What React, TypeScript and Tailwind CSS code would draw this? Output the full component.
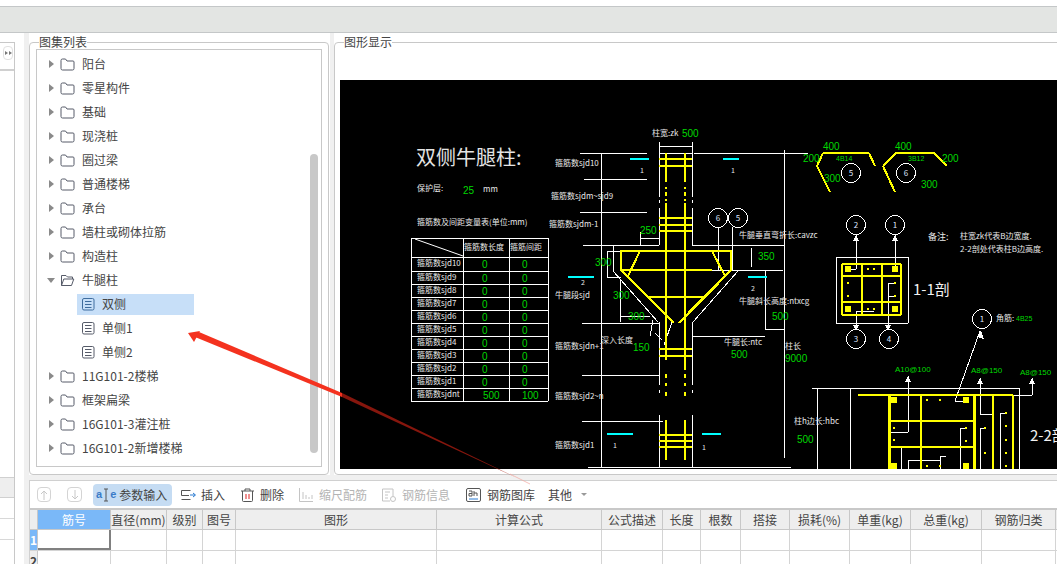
import type { ReactNode } from "react";

const FONT = "font-['Noto_Sans_CJK_SC','Liberation_Sans',sans-serif]";

const treeTop = ["阳台", "零星构件", "基础", "现浇桩", "圈过梁", "普通楼梯", "承台", "墙柱或砌体拉筋", "构造柱"];
const treeBottom = ["11G101-2楼梯", "框架扁梁", "16G101-3灌注桩", "16G101-2新增楼梯"];
const headers = ["直径(mm)", "级别", "图号", "图形", "计算公式", "公式描述", "长度", "根数", "搭接", "损耗(%)", "单重(kg)", "总重(kg)", "钢筋归类"];
const GRID = "grid grid-cols-[8px_73px_56px_36px_33px_201px_165px_61px_38px_40px_49px_60px_61px_71px_74px_1fr]";

function Folder({ open }: { open?: boolean }) {
  return (
    <svg width="15" height="13" viewBox="0 0 15 13" fill="none" stroke="#565b69" strokeWidth="1" className="shrink-0">
      {open ? (
        <path d="M1.5 11.5V1.5H6L7.5 3H12.5V5M1.5 11.5H11.5L13.8 5H3.8L1.5 11.5Z" />
      ) : (
        <path d="M1 2.5Q1 1 2.5 1H5.5L7 3H13Q14 3 14 4V10.5Q14 12 12.5 12H2.5Q1 12 1 10.5Z" />
      )}
    </svg>
  );
}

function Doc({ active }: { active?: boolean }) {
  const c = active ? "#3f6d9e" : "#565b69";
  return (
    <svg width="13" height="13" viewBox="0 0 13 13" fill="none" stroke={c} strokeWidth="1" className="shrink-0">
      <rect x="0.5" y="0.5" width="11.5" height="11.5" rx="1.5" />
      <path d="M3 3.5H9.5M3 6.5H9.5M3 9.5H9.5" />
    </svg>
  );
}

function TreeRow({ label }: { label: string }) {
  return (
    <div className="flex h-6 items-center pl-[12px]">
      <span className="h-0 w-0 border-y-[4px] border-l-[5px] border-y-transparent border-l-[#8a8a8a]" />
      <span className="ml-[6px]"><Folder /></span>
      <span className="ml-[7px] text-xs text-[#444]">{label}</span>
    </div>
  );
}

function ChildRow({ label, active }: { label: string; active?: boolean }) {
  return (
    <div className={`ml-[40px] flex h-6 w-[117px] items-center pl-[5px] ${active ? "bg-[#c7dff8] h-[21px] my-[1.5px]" : ""}`}>
      <Doc active={active} />
      <span className="ml-[7px] text-xs text-[#444]">{label}</span>
    </div>
  );
}

function ToolBtn({ icon, label, className }: { icon: ReactNode; label: string; className: string }) {
  return (
    <div className={`flex items-center text-xs ${className}`}>
      {icon}
      <span>{label}</span>
    </div>
  );
}

// ---- CAD drawing helpers, coordinates are page pixels ----
type Seg = [number, number, number, number];

function Lines({ segs, color = "#fff", w = 1 }: { segs: Seg[]; color?: string; w?: number }) {
  return (
    <g stroke={color} strokeWidth={w}>
      {segs.map(([a, b, c, d], i) => (
        <line key={i} x1={a} y1={b} x2={c} y2={d} />
      ))}
    </g>
  );
}

function T({ x, y, s = 8, c = "#e8e8e8", children }: { x: number; y: number; s?: number; c?: string; children: ReactNode }) {
  return (
    <text x={x} y={y} fontSize={s} fill={c}>
      {children}
    </text>
  );
}

function G({ x, y, s = 10, children }: { x: number; y: number; s?: number; children: ReactNode }) {
  return (
    <text x={x} y={y} fontSize={s} fill="#00d800" fontFamily="Liberation Sans">
      {children}
    </text>
  );
}

function Ring({ x, y, n }: { x: number; y: number; n: string }) {
  return (
    <g>
      <circle cx={x} cy={y} r="9.5" fill="none" stroke="#fff" strokeWidth="1" />
      <text x={x} y={y + 3} fontSize="8" fill="#dfe6ff" textAnchor="middle">{n}</text>
    </g>
  );
}

function Dots({ pts, r }: { pts: [number, number][]; r: number }) {
  return (
    <g fill="#ffff00">
      {pts.map(([x, y], i) => (
        <circle key={i} cx={x} cy={y} r={r} />
      ))}
    </g>
  );
}

const tableRows = [257, 271, 284, 297, 310, 323, 336, 349, 362, 375, 388, 401];
const tableLabels = ["sjd10", "sjd9", "sjd8", "sjd7", "sjd6", "sjd5", "sjd4", "sjd3", "sjd2", "sjd1", "sjdnt"];

const white: Seg[] = [
  // column outline
  [659, 142, 659, 197], [692, 142, 692, 197], [659, 200, 659, 203], [692, 200, 692, 203], [659, 208, 659, 245], [692, 208, 692, 245],
  [659, 322, 659, 385], [692, 322, 692, 385], [659, 390, 659, 393], [692, 390, 692, 393], [659, 415, 659, 467], [692, 415, 692, 467],
  [659, 146, 692, 146], [659, 153, 692, 153], [580, 153, 647, 153], [694, 153, 808, 153], [584, 179, 647, 179], [580, 212, 647, 212],
  [583, 245, 659, 245], [692, 245, 784, 245], [601, 153, 601, 467], [784, 150, 784, 458], [640, 232, 640, 245], [640, 238, 659, 238],
  // corbel offsets
  [613, 245, 613, 271], [608, 251, 621, 251], [607, 251, 607, 277], [607, 277, 621, 277], [613, 271, 658, 322], [738, 271, 693, 322],
  [712, 270, 783, 270], [751, 248, 751, 267], [620, 279, 620, 322], [620, 316, 650, 316], [718, 227, 718, 270], [732, 227, 732, 270],
  [582, 323, 659, 323], [582, 375, 659, 375], [582, 421, 663, 421], [588, 467, 791, 467], [692, 336, 765, 336], [765, 270, 765, 329], [765, 329, 784, 329],
  [653, 320, 650, 336], [672, 322, 664, 345], [655, 333, 662, 340],
  // right section 1-1
  [836, 257, 908, 257], [836, 323, 908, 323], [836, 257, 836, 323], [908, 257, 908, 323],
  [856, 235, 856, 269], [849, 269, 856, 269], [895, 235, 895, 269], [856, 311, 856, 330], [856, 311, 874, 311], [888, 283, 888, 330], [888, 283, 894, 283], [888, 296, 894, 296],
  // section 2-2
  [812, 388, 1019, 388], [1019, 388, 1019, 469], [817, 388, 817, 469], [850, 388, 850, 469], [955, 401, 980, 331], [955, 401, 964, 401],
  [908, 376, 908, 432], [889, 432, 908, 432], [980, 378, 980, 414], [980, 414, 993, 414], [1032, 378, 1032, 395], [1013, 395, 1032, 395],
  [960, 428, 966, 428], [960, 428, 960, 469], [980, 428, 985, 428], [980, 428, 980, 469], [1000, 413, 1006, 413], [1000, 413, 1000, 469],
  [901, 448, 901, 469], [908, 460, 940, 460], [908, 460, 908, 469], [940, 456, 940, 469], [940, 456, 946, 456],
];

const yellow: Seg[] = [
  [666, 153, 666, 182], [685, 153, 685, 182], [666, 187, 666, 189], [685, 187, 685, 189], [666, 192, 666, 196], [685, 192, 685, 196],
  [666, 199, 666, 201], [685, 199, 685, 201], [666, 203, 666, 360], [685, 203, 685, 370], [666, 374, 666, 378], [685, 374, 685, 378],
  [666, 383, 666, 386], [685, 383, 685, 386], [666, 392, 666, 396], [685, 392, 685, 396], [666, 420, 666, 460], [685, 420, 685, 460],
  [659, 159, 692, 159], [659, 166, 692, 166], [659, 218, 692, 218], [659, 225, 692, 225], [659, 231, 692, 231],
  [648, 297, 705, 297], [659, 349, 692, 349], [659, 356, 692, 356], [659, 435, 692, 435], [659, 441, 692, 441], [659, 447, 692, 447],
  [640, 251, 628, 276], [712, 251, 725, 276], [621, 270, 712, 270],
];

const heavy: Seg[] = [
  [621, 251, 731, 251], [621, 250, 621, 270], [731, 250, 731, 270], [621, 270, 674, 323], [731, 270, 679, 323],
];

const bent: Seg[] = [
  [823, 153, 869, 153], [869, 153, 875, 166], [823, 153, 817, 166], [817, 166, 830, 192],
  [896, 153, 934, 153], [934, 153, 947, 166], [896, 153, 883, 166], [883, 166, 895, 192],
  // section 1-1
  [842, 264, 901, 264], [842, 276, 901, 276], [842, 302, 901, 302], [842, 315, 901, 315], [842, 264, 842, 315], [862, 264, 862, 315], [882, 264, 882, 315], [901, 264, 901, 315],
  // section 2-2
  [858, 395, 1013, 395], [889, 421, 974, 421], [889, 447, 974, 447], [921, 395, 921, 469], [993, 395, 993, 469], [1013, 395, 1013, 469],
];

const cyan: Seg[] = [
  [630, 159, 649, 159], [723, 159, 739, 159], [568, 277, 594, 277], [748, 277, 767, 277], [607, 434, 633, 434], [702, 434, 721, 434],
];

function CadDrawing() {
  return (
    <svg viewBox="340 80 717 389" width="717" height="389" className={`block bg-black ${FONT}`} shapeRendering="crispEdges">
      <Lines segs={white} />
      <Lines segs={yellow} color="#ffff00" w={2} />
      <Lines segs={heavy} color="#ffff00" w={2.5} />
      <Lines segs={bent} color="#ffff00" w={2} />
      <Lines segs={[[889, 395, 889, 469], [974, 395, 974, 469]]} color="#ffff00" w={3} />
      <Lines segs={cyan} color="#00ffff" w={2} />

      {/* left title and table */}
      <T x={416} y={165} s={20} c="#e4e4e4">双侧牛腿柱:</T>
      <T x={417} y={191}>保护层:</T>
      <G x={463} y={194}>25</G>
      <T x={483} y={192}>mm</T>
      <T x={417} y={225}>箍筋数及间距变量表(单位:mm)</T>
      <Lines segs={[[411, 238, 548, 238], [411, 238, 411, 401], [463, 238, 463, 401], [509, 238, 509, 401], [548, 238, 548, 401]]} />
      <Lines segs={tableRows.map((y): Seg => [411, y, 548, y])} />
      <line x1={415} y1={239} x2={463} y2={256} stroke="#fff" shapeRendering="auto" />
      <T x={464} y={250}>箍筋数长度</T>
      <T x={510} y={250}>箍筋间距</T>
      {tableLabels.map((l, i) => (
        <g key={l}>
          <T x={417} y={tableRows[i] + 9}>{`箍筋数${l}`}</T>
          <G x={i === 10 ? 483 : 482} y={tableRows[i] + 11}>{i === 10 ? "500" : "0"}</G>
          <G x={522} y={tableRows[i] + 11}>{i === 10 ? "100" : "0"}</G>
        </g>
      ))}

      {/* left dimension labels */}
      <T x={555} y={166}>箍筋数sjd10</T>
      <T x={551} y={199}>箍筋数sjdm~sjd9</T>
      <T x={549} y={227}>箍筋数sjdm-1</T>
      <T x={555} y={298}>牛腿段sjd</T>
      <T x={555} y={349}>箍筋数sjdn+1</T>
      <T x={555} y={399}>箍筋数sjd2~n</T>
      <T x={555} y={448}>箍筋数sjd1</T>
      <T x={601} y={343}>深入长度</T>
      <T x={652} y={136}>柱宽:zk</T>
      <G x={682} y={137}>500</G>
      <G x={640} y={234}>250</G>
      <G x={595} y={266}>300</G>
      <G x={613} y={299}>300</G>
      <G x={628} y={320}>300</G>
      <G x={633} y={351}>150</G>
      <G x={758} y={260}>350</G>
      <G x={772} y={320}>500</G>
      <G x={731} y={358}>500</G>
      <G x={785} y={362}>9000</G>
      <G x={797} y={443}>500</G>
      <T x={640} y={173} s={7}>1</T>
      <T x={731} y={173} s={7}>1</T>
      <T x={581} y={285} s={7}>2</T>
      <T x={751} y={291} s={7}>2</T>
      <T x={613} y={448} s={7}>1</T>
      <T x={702} y={450} s={7}>1</T>
      <T x={739} y={238}>牛腿垂直弯折长:cavzc</T>
      <T x={739} y={304}>牛腿斜长高度:ntxcg</T>
      <T x={724} y={345}>牛腿长:ntc</T>
      <T x={785} y={349}>柱长</T>
      <T x={794} y={424}>柱h边长:hbc</T>

      <Ring x={718} y={218} n="6" />
      <Ring x={738} y={218} n="5" />
      <Ring x={851} y={173} n="5" />
      <Ring x={906} y={173} n="6" />
      <Ring x={856} y={225} n="2" />
      <Ring x={895} y={225} n="1" />
      <Ring x={856} y={339} n="3" />
      <Ring x={889} y={339} n="4" />
      <Ring x={982} y={319} n="1" />

      {/* right top */}
      <G x={823} y={150}>400</G>
      <G x={803} y={162}>200</G>
      <G x={824} y={182}>300</G>
      <G x={836} y={161} s={7}>4B14</G>
      <G x={895} y={150}>400</G>
      <G x={942} y={162}>200</G>
      <G x={908} y={161} s={7}>3B12</G>
      <G x={921} y={188}>300</G>
      <T x={928} y={240} s={9}>备注:</T>
      <T x={960} y={239}>柱宽zk代表B边宽度.</T>
      <T x={960} y={252}>2-2剖处代表柱B边高度.</T>
      <T x={913} y={295} s={15} c="#f2f2f2">1-1剖</T>
      <T x={1030} y={441} s={15} c="#f2f2f2">2-2剖</T>
      <T x={996} y={321}>角筋:</T>
      <G x={1016} y={321} s={7}>4B25</G>
      <G x={895} y={372} s={8}>A10@100</G>
      <G x={971} y={373} s={8}>A8@150</G>
      <G x={1020} y={375} s={8}>A8@150</G>

      <Dots r={3.5} pts={[[848, 269], [895, 269], [848, 309], [895, 309], [894, 400], [966, 400], [894, 466], [966, 466]]} />
      <Dots r={1.5} pts={[[868, 269], [874, 269], [848, 283], [848, 296], [895, 283], [895, 296], [868, 309], [874, 309], [927, 400], [940, 400], [894, 428], [894, 440], [966, 428], [966, 441], [985, 428], [985, 453], [1006, 413], [1006, 426], [1006, 440], [1006, 453], [1006, 466], [927, 466], [940, 466]]} />
      <g fill="#fff">
        <path d="M853 241H859L856 235Z M892 241H898L895 235Z M853 325H859L856 331Z M885 325H891L888 331Z M905 382H911L908 376Z M977 384H983L980 378Z M1029 384H1035L1032 378Z M977 337L984 339L981 330Z" />
      </g>
    </svg>
  );
}

function Arrow() {
  return (
    <svg className="pointer-events-none absolute left-0 top-0" width="1057" height="564" viewBox="0 0 1057 564">
      <path d="M188 333L200 331L194 342Z" fill="#f4321f" />
      <path d="M195 337L199 332L342 393L342 397Z" fill="#f4321f" />
      <path d="M342 393L515 477L342 397Z" fill="#a81c10" opacity="0.8" />
      <path d="M510 474L530 484" stroke="#f4a8a0" strokeWidth="0.7" />
    </svg>
  );
}

export default function App() {
  return (
    <div className={`relative flex h-[564px] w-[1057px] flex-col overflow-hidden bg-white ${FONT}`}>
      <div className="h-[6px] bg-white" />
      <div className="h-[27px] border-y border-[#c4c7c8] bg-[#e3e5e3]" />

      <div className="flex min-h-0 flex-1">
        {/* collapsed left column */}
        <div className="flex w-[24px] shrink-0 flex-col bg-white pt-[9px]">
          <div className="flex h-full w-[15px] flex-col border-r border-t border-[#c8c8c8]">
            <div className="flex h-[28px] justify-end border-b-[2px] border-[#d0d0d0] pt-[3px] pr-[1px]">
              <div className="flex h-[14px] w-[10px] items-center justify-center gap-px rounded border border-[#e0e0e0] text-[6px] text-[#777]">
                <span className="h-0 w-0 border-y-[2.5px] border-l-[3px] border-y-transparent border-l-[#777]" />
                <span className="h-0 w-0 border-y-[2.5px] border-l-[3px] border-y-transparent border-l-[#777]" />
              </div>
            </div>
            <div className="mt-[406px] h-[21px] border-y border-[#d0d0d0] bg-[#eee]" />
            <div className="h-[21px] border-b border-[#d8d8d8]" />
            <div className="h-[21px] border-b border-[#d8d8d8]" />
          </div>
        </div>
        <div className="w-[5px] shrink-0 bg-[#f0f0f0]" />

        <div className="flex min-w-0 flex-1 flex-col bg-[#f0f0f0]">
          {/* tree and drawing panels */}
          <div className="flex h-[442px] shrink-0">
            <div className="h-full w-[301px] shrink-0 bg-white pt-[2px]">
              <fieldset className="h-[440px] w-[299px] rounded-[4px] border border-[#c8c8c8] px-[6px]">
                <legend className="ml-[3px] text-xs leading-[14px] text-[#444]">图集列表</legend>
                <div className="relative h-[418px] w-[286px] border border-[#c8c8c8] pt-[2px]">
                  {treeTop.map((t) => (
                    <TreeRow key={t} label={t} />
                  ))}
                  <div className="flex h-6 items-center pl-[10px]">
                    <span className="h-0 w-0 border-x-[4px] border-t-[5px] border-x-transparent border-t-[#8a8a8a]" />
                    <span className="ml-[5px]"><Folder open /></span>
                    <span className="ml-[7px] text-xs text-[#444]">牛腿柱</span>
                  </div>
                  <ChildRow label="双侧" active />
                  <ChildRow label="单侧1" />
                  <ChildRow label="单侧2" />
                  {treeBottom.map((t) => (
                    <TreeRow key={t} label={t} />
                  ))}
                  <div className="absolute right-[3px] top-[104px] h-[299px] w-[8px] rounded-full bg-[#c8c8c8]" />
                </div>
              </fieldset>
            </div>
            <div className="w-[4px] shrink-0" />
            <div className="min-w-0 flex-1 overflow-hidden bg-white pt-[2px]">
              <fieldset className="h-[440px] w-[740px] rounded-[4px] border border-[#c8c8c8] pl-[5px]">
                <legend className="ml-[4px] text-xs leading-[14px] text-[#444]">图形显示</legend>
                <div className="mt-[31px]">
                  <CadDrawing />
                </div>
              </fieldset>
            </div>
          </div>

          {/* toolbar and grid */}
          <div className="mt-[5px] flex min-h-0 flex-1 flex-col border-l border-t border-[#d0d0d0] bg-white">
            <div className="flex h-[27px] shrink-0 items-center text-[#444]">
              <div className="ml-[7px] flex h-[15px] w-[14px] items-center justify-center rounded-sm border border-[#d4d4d4] text-[#c8c8c8]">
                <svg width="8" height="10" viewBox="0 0 8 10" fill="none" stroke="currentColor"><path d="M4 10V1M1 4L4 1L7 4" /></svg>
              </div>
              <div className="ml-[16px] flex h-[15px] w-[15px] items-center justify-center rounded-sm border border-[#d4d4d4] text-[#c8c8c8]">
                <svg width="8" height="10" viewBox="0 0 8 10" fill="none" stroke="currentColor"><path d="M4 0V9M1 6L4 9L7 6" /></svg>
              </div>
              <div className="ml-[11px] flex h-[22px] w-[79px] items-center rounded-[4px] bg-[#c5dcf3] pl-[3px] text-xs">
                <span className="font-['Liberation_Sans',sans-serif] text-[11px] font-bold leading-none text-[#3a7bc8]">a</span>
                <svg width="6" height="14" viewBox="0 0 6 14" fill="none" stroke="#555" className="mx-px"><path d="M1 1H5M3 1V13M1 13H5" /></svg>
                <span className="font-['Liberation_Sans',sans-serif] text-[11px] font-bold leading-none text-[#3a7bc8]">e</span>
                <span className="ml-[3px]">参数输入</span>
              </div>
              <ToolBtn
                className="ml-[9px] gap-[5px]"
                label="插入"
                icon={
                  <svg width="15" height="12" viewBox="0 0 15 12" fill="none" stroke="#555">
                    <path d="M0.5 1.5H9.5M0.5 1.5V6.5H8M0.5 10.5H9.5" />
                    <path d="M9 6H14M12 4L14.5 6L12 8" stroke="#2a7ad0" />
                  </svg>
                }
              />
              <ToolBtn
                className="ml-[16px] gap-[6px]"
                label="删除"
                icon={
                  <svg width="13" height="14" viewBox="0 0 13 14" fill="none" stroke="#555">
                    <path d="M0 3H13M4 3V1H9V3M1.5 3V12.5Q1.5 13.5 2.5 13.5H10.5Q11.5 13.5 11.5 12.5V3" />
                    <path d="M5 6V11M8 6V11" stroke="#e02020" />
                  </svg>
                }
              />
              <ToolBtn
                className="ml-[15px] gap-[6px] text-[#b4b4b4]"
                label="缩尺配筋"
                icon={
                  <svg width="14" height="14" viewBox="0 0 14 14" fill="none" stroke="#c4c4c4">
                    <path d="M0.5 0V13.5H14M4 4V11M7 7V11M10 9V11M13 7V11" />
                  </svg>
                }
              />
              <ToolBtn
                className="ml-[15px] gap-[5px] text-[#b4b4b4]"
                label="钢筋信息"
                icon={
                  <svg width="15" height="14" viewBox="0 0 15 14" fill="none" stroke="#c4c4c4">
                    <path d="M11 8V1H0.5V13H8M3 4H8M3 7H6M3 10H6" />
                    <circle cx="11" cy="11" r="2.5" />
                  </svg>
                }
              />
              <ToolBtn
                className="ml-[16px] gap-[6px]"
                label="钢筋图库"
                icon={
                  <svg width="15" height="14" viewBox="0 0 15 14" fill="none" stroke="#555">
                    <rect x="0.5" y="0.5" width="14" height="13" rx="1.5" />
                    <path d="M3 3H6V8H3V5.5H6M8 3V8M8 5H11V8" />
                    <path d="M3 11H12" stroke="#2a7ad0" />
                  </svg>
                }
              />
              <div className="ml-[13px] flex items-center text-xs">
                其他
                <span className="ml-[9px] h-0 w-0 border-x-[3px] border-t-[3px] border-x-transparent border-t-[#999]" />
              </div>
            </div>

            <div className={`${GRID} h-[22px] shrink-0 border-y-[2px] border-b border-[#c8c8c8] bg-[#eee] text-xs text-[#444]`}>
              <div className="border-r border-[#c8c8c8]" />
              <div className="flex items-center justify-center border-r border-[#c8c8c8] bg-[#7ab8f8] text-white">筋号</div>
              {headers.map((h) => (
                <div key={h} className="flex items-center justify-center whitespace-nowrap border-r border-[#c8c8c8]">{h}</div>
              ))}
              <div />
            </div>

            {["1", "2"].map((n) => (
              <div key={n} className={`${GRID} h-[21px] shrink-0 border-b border-[#d4d4d4] text-xs text-[#444]`}>
                <div className={`flex items-center justify-center border-r border-[#c8c8c8] font-bold ${n === "1" ? "bg-[#7ab8f8] text-white" : "bg-[#eee]"}`}>{n}</div>
                <div className={n === "1" ? "border-b-[2px] border-r-[2px] border-[#808080]" : "border-r border-[#d4d4d4]"} />
                {headers.map((h) => (
                  <div key={h} className="border-r border-[#d4d4d4]" />
                ))}
                <div />
              </div>
            ))}
          </div>
        </div>
      </div>
      <Arrow />
    </div>
  );
}
